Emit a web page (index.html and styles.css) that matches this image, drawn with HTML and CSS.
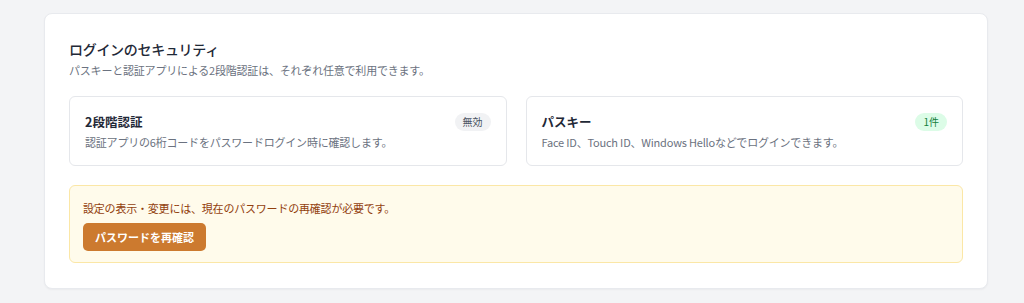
FILE: index.html
```html
<!DOCTYPE html>
<html lang="ja">
<head>
    <meta charset="UTF-8">
    <meta name="viewport" content="width=device-width, initial-scale=1.0">
    <title>ログインのセキュリティ</title>
    <link rel="stylesheet" href="styles.css">
</head>
<body>
    <div class="page">
        <section class="security-card">
            <h2>ログインのセキュリティ</h2>
            <p class="lead">パスキーと認証アプリによる2段階認証は、それぞれ任意で利用できます。</p>

            <div class="methods">
                <div class="method">
                    <div class="method-head">
                        <h3>2段階認証</h3>
                        <span class="badge badge-off">無効</span>
                    </div>
                    <p>認証アプリの6桁コードをパスワードログイン時に確認します。</p>
                </div>
                <div class="method">
                    <div class="method-head">
                        <h3>パスキー</h3>
                        <span class="badge badge-on">1件</span>
                    </div>
                    <p>Face ID、Touch ID、Windows Helloなどでログインできます。</p>
                </div>
            </div>

            <div class="notice">
                <p>設定の表示・変更には、現在のパスワードの再確認が必要です。</p>
                <button type="button" class="confirm-btn">パスワードを再確認</button>
            </div>
        </section>
    </div>
</body>
</html>
```

FILE: styles.css
```css
* {
    margin: 0;
    padding: 0;
    box-sizing: border-box;
    font-family: "Noto Sans CJK JP", "Noto Sans", sans-serif;
}

body {
    background: #f3f4f6;
    color: #1f2937;
}

.page {
    padding: 13px 36px 14px 44px;
}

.security-card {
    background: #fff;
    border: 1px solid #e8eaee;
    border-radius: 8px;
    padding: 24px 24px 25px;
    box-shadow: 0 1px 2px rgba(0, 0, 0, 0.04);
}

h2 {
    font-size: 14px;
    font-weight: 500;
    letter-spacing: -0.3px;
    line-height: 22px;
    color: #1f2937;
}

.lead {
    margin-top: 1px;
    font-size: 11px;
    letter-spacing: -0.2px;
    line-height: 18px;
    color: #6b7280;
}

.methods {
    display: grid;
    grid-template-columns: 1fr 1fr;
    gap: 19px;
    margin-top: 17px;
}

.method {
    border: 1px solid #e5e7eb;
    border-radius: 6px;
    padding: 15px 15px 14px;
}

.method-head {
    display: flex;
    justify-content: space-between;
    align-items: center;
}

.method h3 {
    font-size: 12.5px;
    font-weight: 700;
    line-height: 20px;
    color: #1f2937;
}

.method p {
    margin-top: 1px;
    font-size: 11px;
    letter-spacing: -0.2px;
    line-height: 18px;
    color: #6b7280;
}

.badge {
    font-size: 10px;
    line-height: 18px;
    padding: 0 8px;
    border-radius: 9px;
}

.badge-off {
    background: #f1f2f4;
    color: #4b5563;
}

.badge-on {
    background: #dcfce7;
    color: #15803d;
}

.notice {
    margin-top: 19px;
    background: #fffbeb;
    border: 1px solid #fbe7a6;
    border-radius: 6px;
    padding: 13px 13px 11px;
}

.notice p {
    font-size: 11px;
    letter-spacing: -0.2px;
    line-height: 18px;
    color: #92400e;
}

.confirm-btn {
    display: block;
    margin-top: 6px;
    background: #cc7a2f;
    color: #fff;
    border: none;
    border-radius: 5px;
    font-size: 11px;
    font-weight: 700;
    line-height: 28px;
    padding: 0 12px;
}
```
